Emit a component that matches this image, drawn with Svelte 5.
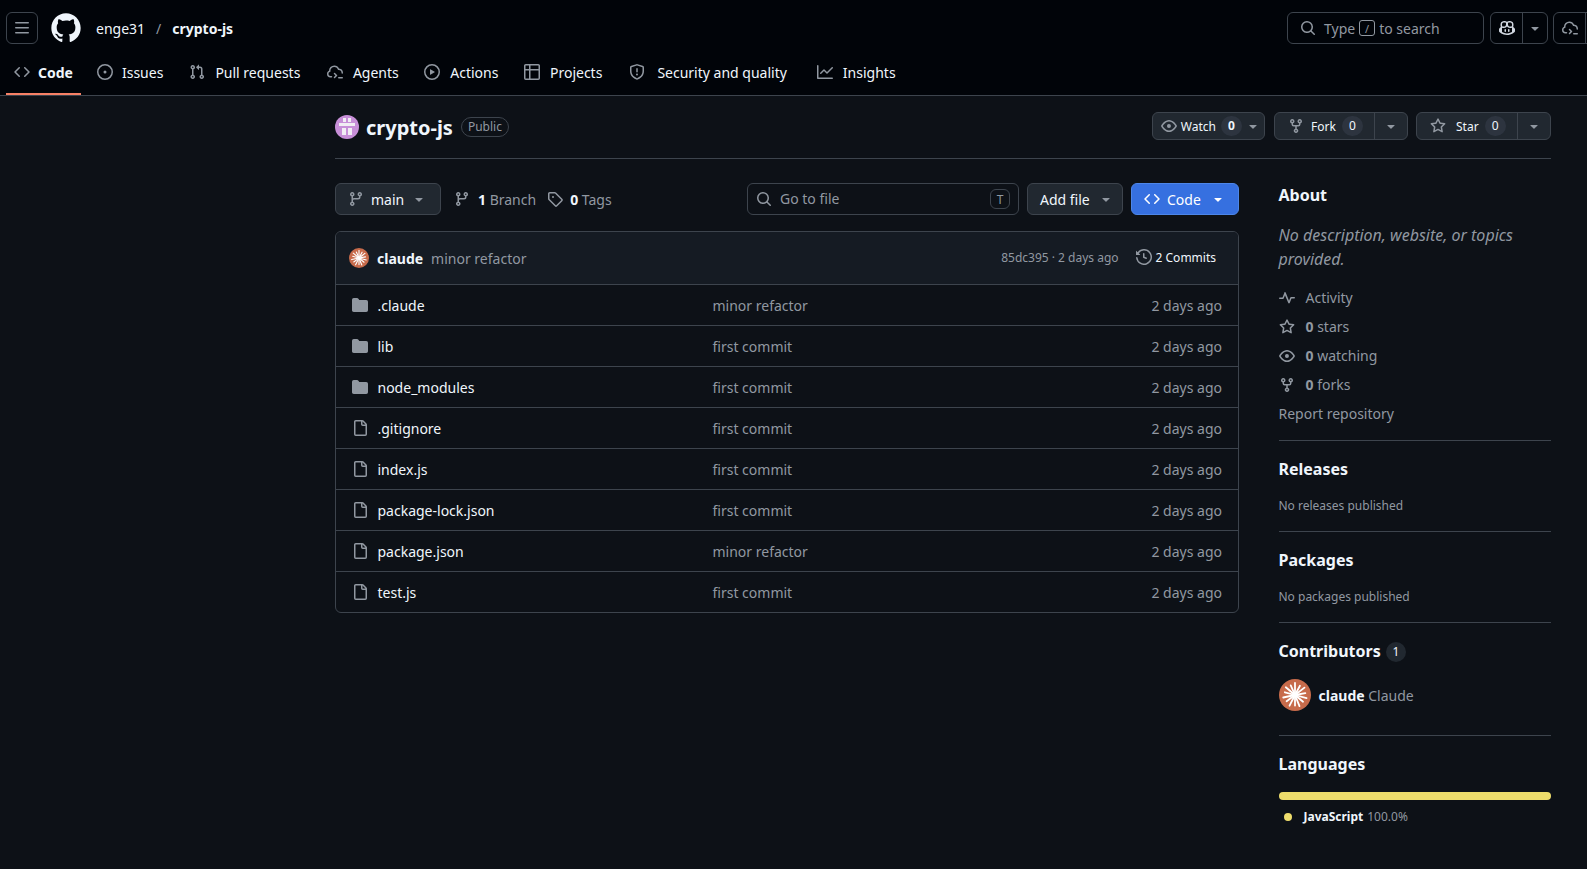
<script>
	const tabs = [
		{ label: 'Code', icon: 'code', active: true },
		{ label: 'Issues', icon: 'issue' },
		{ label: 'Pull requests', icon: 'pr' },
		{ label: 'Agents', icon: 'agent' },
		{ label: 'Actions', icon: 'play' },
		{ label: 'Projects', icon: 'table' },
		{ label: 'Security and quality', icon: 'shield' },
		{ label: 'Insights', icon: 'graph' }
	];

	const files = [
		{ name: '.claude', dir: true, msg: 'minor refactor' },
		{ name: 'lib', dir: true, msg: 'first commit' },
		{ name: 'node_modules', dir: true, msg: 'first commit' },
		{ name: '.gitignore', msg: 'first commit' },
		{ name: 'index.js', msg: 'first commit' },
		{ name: 'package-lock.json', msg: 'first commit' },
		{ name: 'package.json', msg: 'minor refactor' },
		{ name: 'test.js', msg: 'first commit' }
	];

	const icons = {
		bars: 'M1 2.75A.75.75 0 0 1 1.75 2h12.5a.75.75 0 0 1 0 1.5H1.75A.75.75 0 0 1 1 2.75Zm0 5A.75.75 0 0 1 1.75 7h12.5a.75.75 0 0 1 0 1.5H1.75A.75.75 0 0 1 1 7.75ZM1.75 12h12.5a.75.75 0 0 1 0 1.5H1.75a.75.75 0 0 1 0-1.5Z',
		code: 'm11.28 3.22 4.25 4.25a.75.75 0 0 1 0 1.06l-4.25 4.25a.749.749 0 0 1-1.275-.326.749.749 0 0 1 .215-.734L13.94 8l-3.72-3.72a.749.749 0 0 1 .326-1.275.749.749 0 0 1 .734.215Zm-6.56 0a.751.751 0 0 1 1.042.018.751.751 0 0 1 .018 1.042L2.06 8l3.72 3.72a.749.749 0 0 1-.326 1.275.749.749 0 0 1-.734-.215L.47 8.53a.75.75 0 0 1 0-1.06Z',
		issue: 'M8 9.5a1.5 1.5 0 1 0 0-3 1.5 1.5 0 0 0 0 3ZM8 0a8 8 0 1 1 0 16A8 8 0 0 1 8 0ZM1.5 8a6.5 6.5 0 1 0 13 0 6.5 6.5 0 0 0-13 0Z',
		pr: 'M1.5 3.25a2.25 2.25 0 1 1 3 2.122v5.256a2.251 2.251 0 1 1-1.5 0V5.372A2.25 2.25 0 0 1 1.5 3.25Zm5.677-.177L9.573.677A.25.25 0 0 1 10 .854V2.5h1A2.5 2.5 0 0 1 13.5 5v5.628a2.251 2.251 0 1 1-1.5 0V5a1 1 0 0 0-1-1h-1v1.646a.25.25 0 0 1-.427.177L7.177 3.427a.25.25 0 0 1 0-.354ZM3.75 2.5a.75.75 0 1 0 0 1.5.75.75 0 0 0 0-1.5Zm0 9.5a.75.75 0 1 0 0 1.5.75.75 0 0 0 0-1.5Zm8.25.75a.75.75 0 1 0 1.5 0 .75.75 0 0 0-1.5 0Z',
		agent: 'M14.5 8.9v-.052A2.956 2.956 0 0 0 11.542 5.9a.815.815 0 0 1-.751-.501l-.145-.348A3.496 3.496 0 0 0 7.421 2.9h-.206a3.754 3.754 0 0 0-3.736 4.118l.011.121a.822.822 0 0 1-.619.879A1.81 1.81 0 0 0 1.5 9.773v.14c0 1.097.89 1.987 1.987 1.987H4.5a.75.75 0 0 1 0 1.5H3.487A3.487 3.487 0 0 1 0 9.913v-.14C0 8.449.785 7.274 1.963 6.75A5.253 5.253 0 0 1 7.215 1.4h.206a4.992 4.992 0 0 1 4.586 3.024A4.455 4.455 0 0 1 16 8.848V8.9a.75.75 0 0 1-1.5 0ZM6.97 8.97a.75.75 0 0 1 1.06 0l2 2a.75.75 0 0 1 0 1.06l-2 2a.749.749 0 1 1-1.06-1.06L8.44 11.5 6.97 10.03a.75.75 0 0 1 0-1.06ZM11.75 13h3.5a.75.75 0 0 1 0 1.5h-3.5a.75.75 0 0 1 0-1.5Z',
		play: 'M8 0a8 8 0 1 1 0 16A8 8 0 0 1 8 0ZM1.5 8a6.5 6.5 0 1 0 13 0 6.5 6.5 0 0 0-13 0Zm4.879-2.773 4.264 2.559a.25.25 0 0 1 0 .428l-4.264 2.559A.25.25 0 0 1 6 10.559V5.442a.25.25 0 0 1 .379-.215Z',
		table: 'M0 1.75C0 .784.784 0 1.75 0h12.5C15.216 0 16 .784 16 1.75v12.5A1.75 1.75 0 0 1 14.25 16H1.75A1.75 1.75 0 0 1 0 14.25ZM6.5 6.5v8h7.75a.25.25 0 0 0 .25-.25V6.5Zm8-1.5V1.75a.25.25 0 0 0-.25-.25H6.5V5Zm-13 1.5v7.75c0 .138.112.25.25.25H5v-8ZM5 5V1.5H1.75a.25.25 0 0 0-.25.25V5Z',
		shield: 'M7.467.133a1.748 1.748 0 0 1 1.066 0l5.25 1.68A1.75 1.75 0 0 1 15 3.48V7c0 1.566-.32 3.182-1.303 4.682-.983 1.498-2.585 2.813-5.032 3.855a1.697 1.697 0 0 1-1.33 0c-2.447-1.042-4.049-2.357-5.032-3.855C1.32 10.182 1 8.566 1 7V3.48a1.75 1.75 0 0 1 1.217-1.667Zm.61 1.429a.25.25 0 0 0-.153 0l-5.25 1.68a.25.25 0 0 0-.174.238V7c0 1.358.275 2.666 1.057 3.86.784 1.194 2.121 2.34 4.366 3.297a.196.196 0 0 0 .154 0c2.245-.956 3.582-2.104 4.366-3.298C13.225 9.666 13.5 8.36 13.5 7V3.48a.251.251 0 0 0-.174-.237l-5.25-1.68ZM8.75 4.75v3a.75.75 0 0 1-1.5 0v-3a.75.75 0 0 1 1.5 0ZM9 10.5a1 1 0 1 1-2 0 1 1 0 0 1 2 0Z',
		graph: 'M1.5 1.75V13.5h13.75a.75.75 0 0 1 0 1.5H.75a.75.75 0 0 1-.75-.75V1.75a.75.75 0 0 1 1.5 0Zm14.28 2.53-5.25 5.25a.75.75 0 0 1-1.06 0L7 7.06 4.28 9.78a.751.751 0 0 1-1.042-.018.751.751 0 0 1-.018-1.042l3.25-3.25a.75.75 0 0 1 1.06 0L10 7.94l4.72-4.72a.751.751 0 0 1 1.042.018.751.751 0 0 1 .018 1.042Z',
		search: 'M10.68 11.74a6 6 0 0 1-7.922-8.982 6 6 0 0 1 8.982 7.922l3.04 3.04a.749.749 0 0 1-.326 1.275.749.749 0 0 1-.734-.215ZM11.5 7a4.499 4.499 0 1 0-8.997 0A4.499 4.499 0 0 0 11.5 7Z',
		copilot: 'M7.998 15.035c-4.562 0-7.873-2.914-7.998-3.749V9.338c.085-.628.677-1.686 1.588-2.065.013-.07.024-.143.036-.218.029-.183.06-.384.126-.612-.201-.508-.254-1.084-.254-1.656 0-.87.128-1.769.693-2.484.579-.733 1.494-1.124 2.724-1.261 1.206-.134 2.262.034 2.944.765.05.053.096.108.139.165.044-.057.094-.112.143-.165.682-.731 1.738-.899 2.944-.765 1.23.137 2.145.528 2.724 1.261.566.715.693 1.614.693 2.484 0 .572-.053 1.148-.254 1.656.066.228.098.429.126.612.012.076.024.148.037.218.924.385 1.522 1.471 1.591 2.095v1.872c0 .766-3.351 3.795-8.002 3.795Zm0-1.485c2.28 0 4.584-1.11 5.002-1.433V7.862l-.023-.116c-.49.21-1.075.291-1.727.291-1.146 0-2.059-.327-2.71-.991A3.222 3.222 0 0 1 8 6.303a3.24 3.24 0 0 1-.544.743c-.65.664-1.563.991-2.71.991-.652 0-1.236-.081-1.727-.291l-.023.116v4.255c.419.323 2.722 1.433 5.002 1.433ZM6.762 2.83c-.193-.206-.637-.413-1.682-.297-1.019.113-1.479.404-1.713.7-.247.312-.369.789-.369 1.554 0 .793.129 1.171.308 1.371.162.181.519.379 1.442.379.853 0 1.339-.235 1.638-.54.315-.322.527-.827.617-1.553.117-.935-.037-1.395-.241-1.614Zm4.155-.297c-1.044-.116-1.488.091-1.681.297-.204.219-.359.679-.242 1.614.091.726.303 1.231.618 1.553.299.305.784.54 1.638.54.922 0 1.28-.198 1.442-.379.179-.2.308-.578.308-1.371 0-.765-.123-1.242-.37-1.554-.233-.296-.693-.587-1.713-.7ZM6.25 9.037a.75.75 0 0 1 .75.75v1.501a.75.75 0 0 1-1.5 0V9.787a.75.75 0 0 1 .75-.75Zm4.25.75v1.501a.75.75 0 0 1-1.5 0V9.787a.75.75 0 0 1 1.5 0Z',
		eye: 'M8 2c1.981 0 3.671.992 4.933 2.078 1.27 1.091 2.187 2.345 2.637 3.023a1.62 1.62 0 0 1 0 1.798c-.45.678-1.367 1.932-2.637 3.023C11.67 13.008 9.981 14 8 14c-1.981 0-3.671-.992-4.933-2.078C1.797 10.83.88 9.576.43 8.898a1.62 1.62 0 0 1 0-1.798c.45-.677 1.367-1.931 2.637-3.022C4.33 2.992 6.019 2 8 2ZM1.679 7.932a.12.12 0 0 0 0 .136c.411.622 1.241 1.75 2.366 2.717C5.176 11.758 6.527 12.5 8 12.5c1.473 0 2.825-.742 3.955-1.715 1.124-.967 1.954-2.096 2.366-2.717a.12.12 0 0 0 0-.136c-.412-.621-1.242-1.75-2.366-2.717C10.824 4.242 9.473 3.5 8 3.5c-1.473 0-2.825.742-3.955 1.715-1.124.967-1.954 2.096-2.366 2.717ZM8 10a2 2 0 1 1-.001-3.999A2 2 0 0 1 8 10Z',
		fork: 'M5 5.372v.878c0 .414.336.75.75.75h4.5a.75.75 0 0 0 .75-.75v-.878a2.25 2.25 0 1 1 1.5 0v.878a2.25 2.25 0 0 1-2.25 2.25h-1.5v2.128a2.251 2.251 0 1 1-1.5 0V8.5h-1.5A2.25 2.25 0 0 1 3.5 6.25v-.878a2.25 2.25 0 1 1 1.5 0ZM5 3.25a.75.75 0 1 0-1.5 0 .75.75 0 0 0 1.5 0Zm6.75.75a.75.75 0 1 0 0-1.5.75.75 0 0 0 0 1.5Zm-3 8.75a.75.75 0 1 0-1.5 0 .75.75 0 0 0 1.5 0Z',
		star: 'M8 .25a.75.75 0 0 1 .673.418l1.882 3.815 4.21.612a.75.75 0 0 1 .416 1.279l-3.046 2.97.719 4.192a.751.751 0 0 1-1.088.791L8 12.347l-3.766 1.98a.75.75 0 0 1-1.088-.79l.72-4.194L.818 6.374a.75.75 0 0 1 .416-1.28l4.21-.611L7.327.668A.75.75 0 0 1 8 .25Zm0 2.445L6.615 5.5a.75.75 0 0 1-.564.41l-3.097.45 2.24 2.184a.75.75 0 0 1 .216.664l-.528 3.084 2.769-1.456a.75.75 0 0 1 .698 0l2.77 1.456-.53-3.084a.75.75 0 0 1 .216-.664l2.24-2.183-3.096-.45a.75.75 0 0 1-.564-.41L8 2.694Z',
		branch: 'M9.5 3.25a2.25 2.25 0 1 1 3 2.122V6A2.5 2.5 0 0 1 10 8.5H6a1 1 0 0 0-1 1v1.128a2.251 2.251 0 1 1-1.5 0V5.372a2.25 2.25 0 1 1 1.5 0v1.836A2.493 2.493 0 0 1 6 7h4a1 1 0 0 0 1-1v-.628A2.25 2.25 0 0 1 9.5 3.25Zm-6 0a.75.75 0 1 0 1.5 0 .75.75 0 0 0-1.5 0Zm8.25-.75a.75.75 0 1 0 0 1.5.75.75 0 0 0 0-1.5ZM4.25 12a.75.75 0 1 0 0 1.5.75.75 0 0 0 0-1.5Z',
		tag: 'M1 7.775V2.75C1 1.784 1.784 1 2.75 1h5.025c.464 0 .91.184 1.238.513l6.25 6.25a1.75 1.75 0 0 1 0 2.474l-5.026 5.026a1.75 1.75 0 0 1-2.474 0l-6.25-6.25A1.752 1.752 0 0 1 1 7.775Zm1.5 0c0 .066.026.13.073.177l6.25 6.25a.25.25 0 0 0 .354 0l5.025-5.025a.25.25 0 0 0 0-.354l-6.25-6.25a.25.25 0 0 0-.177-.073H2.75a.25.25 0 0 0-.25.25ZM6 5a1 1 0 1 1 0 2 1 1 0 0 1 0-2Z',
		history: 'm.427 1.927 1.215 1.215a8.002 8.002 0 1 1-1.6 5.685.75.75 0 1 1 1.493-.154 6.5 6.5 0 1 0 1.18-4.458l1.358 1.358A.25.25 0 0 1 3.896 6H.25A.25.25 0 0 1 0 5.75V2.104a.25.25 0 0 1 .427-.177ZM7.75 4a.75.75 0 0 1 .75.75v2.992l2.028.812a.75.75 0 0 1-.557 1.392l-2.5-1A.751.751 0 0 1 7 8.25v-3.5A.75.75 0 0 1 7.75 4Z',
		folder: 'M1.75 1A1.75 1.75 0 0 0 0 2.75v10.5C0 14.216.784 15 1.75 15h12.5A1.75 1.75 0 0 0 16 13.25v-8.5A1.75 1.75 0 0 0 14.25 3H7.5a.25.25 0 0 1-.2-.1l-.9-1.2C6.07 1.26 5.55 1 5 1H1.75Z',
		file: 'M2 1.75C2 .784 2.784 0 3.75 0h6.586c.464 0 .909.184 1.237.513l2.914 2.914c.329.328.513.773.513 1.237v9.586A1.75 1.75 0 0 1 13.25 16h-9.5A1.75 1.75 0 0 1 2 14.25Zm1.75-.25a.25.25 0 0 0-.25.25v12.5c0 .138.112.25.25.25h9.5a.25.25 0 0 0 .25-.25V6h-2.75A1.75 1.75 0 0 1 9 4.25V1.5Zm6.75.062V4.25c0 .138.112.25.25.25h2.688l-.011-.013-2.914-2.914-.013-.011Z',
		pulse: 'M6 2c.306 0 .582.187.696.471L10 10.731l1.304-3.26A.751.751 0 0 1 12 7h3.25a.75.75 0 0 1 0 1.5h-2.742l-1.812 4.528a.751.751 0 0 1-1.392 0L6 5.269 4.696 8.53A.75.75 0 0 1 4 9H.75a.75.75 0 0 1 0-1.5h2.742l1.812-4.529A.751.751 0 0 1 6 2Z',
		caret: 'm4.427 7.427 3.396 3.396a.25.25 0 0 0 .354 0l3.396-3.396A.25.25 0 0 0 11.396 7H4.604a.25.25 0 0 0-.177.427Z'
	};

	const octocat = 'M12 1C5.923 1 1 5.923 1 12c0 4.867 3.149 8.979 7.521 10.436.55.096.756-.233.756-.522 0-.262-.013-1.128-.013-2.049-2.764.509-3.479-.674-3.699-1.292-.124-.317-.66-1.293-1.127-1.554-.385-.207-.936-.715-.014-.729.866-.014 1.485.797 1.691 1.128.99 1.663 2.571 1.196 3.204.907.096-.715.385-1.196.701-1.471-2.448-.275-5.005-1.224-5.005-5.432 0-1.196.426-2.186 1.128-2.956-.111-.275-.496-1.402.11-2.915 0 0 .921-.288 3.024 1.128a10.193 10.193 0 0 1 2.75-.371c.936 0 1.871.123 2.75.371 2.104-1.43 3.025-1.128 3.025-1.128.605 1.513.221 2.64.111 2.915.701.77 1.127 1.747 1.127 2.956 0 4.222-2.571 5.157-5.019 5.432.399.344.743 1.004.743 2.035 0 1.471-.014 2.654-.014 3.025 0 .289.206.632.756.522C19.851 20.979 23 16.854 23 12c0-6.077-4.922-11-11-11Z';

	// white rays of the claude avatar
	const rays = [0, 28, 52, 80, 105, 130, 158, 180, 207, 233, 258, 285, 310, 336];
</script>

{#snippet icon(name, size = 16)}
	<svg class="icon" width={size} height={size} viewBox="0 0 16 16" fill="currentColor" aria-hidden="true"><path d={icons[name]} /></svg>
{/snippet}

{#snippet claude(size)}
	<svg class="claude" width={size} height={size} viewBox="0 0 32 32" aria-hidden="true">
		<circle cx="16" cy="16" r="16" fill="#c76b4b" />
		<g stroke="#fff" stroke-width="1.8" stroke-linecap="round">
			{#each rays as r, i}
				<line x1="16" y1="16" x2="16" y2={i % 2 ? 5.5 : 4} transform="rotate({r} 16 16)" />
			{/each}
		</g>
	</svg>
{/snippet}

<header class="top">
	<div class="top-row">
		<button class="hdr-btn menu">{@render icon('bars')}</button>
		<svg class="logo" width="32" height="32" viewBox="0 0 24 24" fill="#f0f6fc" aria-hidden="true"><path d={octocat} /></svg>
		<a class="owner" href="#top">enge31</a>
		<span class="slash">/</span>
		<a class="repo" href="#top">crypto-js</a>
		<div class="spacer"></div>
		<div class="search">
			{@render icon('search')}
			<span>Type</span>
			<kbd>/</kbd>
			<span>to search</span>
		</div>
		<div class="split">
			<span class="seg wide">{@render icon('copilot')}</span>
			<span class="seg narrow">{@render icon('caret')}</span>
		</div>
		<div class="split last">
			<span class="seg wide">{@render icon('agent')}</span>
			<span class="seg narrow">{@render icon('caret')}</span>
		</div>
	</div>
	<nav class="tabs">
		{#each tabs as t}
			<a class="tab" class:active={t.active} href="#top">
				{@render icon(t.icon)}
				<span>{t.label}</span>
			</a>
		{/each}
	</nav>
</header>

<main class="page">
	<div class="repo-head">
		<div class="title">
			<svg class="repo-avatar" width="24" height="24" viewBox="0 0 24 24" aria-hidden="true">
				<circle cx="12" cy="12" r="12" fill="#c78fd8" />
				<g fill="#f1edf4">
					<rect x="8" y="3" width="3" height="4" />
					<rect x="13" y="3" width="3" height="4" />
					<rect x="4" y="8" width="16" height="3" />
					<rect x="7" y="13" width="4" height="7" />
					<rect x="13" y="13" width="4" height="7" />
				</g>
			</svg>
			<strong>crypto-js</strong>
			<span class="public">Public</span>
		</div>
		<div class="actions">
			<div class="pill">
				<span class="pill-main watch">{@render icon('eye')}Watch<em>0</em></span>
				<span class="pill-caret small">{@render icon('caret')}</span>
			</div>
			<div class="pill">
				<span class="pill-main fork">{@render icon('fork')}Fork<em>0</em></span>
				<span class="pill-caret">{@render icon('caret')}</span>
			</div>
			<div class="pill">
				<span class="pill-main star">{@render icon('star')}Star<em>0</em></span>
				<span class="pill-caret">{@render icon('caret')}</span>
			</div>
		</div>
	</div>

	<div class="columns">
		<section class="code-col">
			<div class="toolbar">
				<button class="btn main-btn">{@render icon('branch')}<span>main</span>{@render icon('caret')}</button>
				<span class="meta branch">{@render icon('branch')}<b>1</b> Branch</span>
				<span class="meta tags">{@render icon('tag')}<b>0</b> Tags</span>
				<div class="spacer"></div>
				<div class="goto">
					{@render icon('search')}
					<span>Go to file</span>
					<kbd>T</kbd>
				</div>
				<button class="btn add">Add file{@render icon('caret')}</button>
				<button class="btn primary">{@render icon('code')}<span>Code</span>{@render icon('caret')}</button>
			</div>

			<div class="table">
				<div class="commit">
					{@render claude(20)}
					<b>claude</b>
					<span class="commit-msg">minor refactor</span>
					<div class="spacer"></div>
					<span class="sha">85dc395 · 2 days ago</span>
					<span class="commits">{@render icon('history')}2 Commits</span>
				</div>
				{#each files as f}
					<div class="row">
						<span class="file-icon" class:dir={f.dir}>{@render icon(f.dir ? 'folder' : 'file')}</span>
						<span class="name">{f.name}</span>
						<span class="msg">{f.msg}</span>
						<span class="age">2 days ago</span>
					</div>
				{/each}
			</div>
		</section>

		<aside class="side">
			<section class="about">
				<h2>About</h2>
				<p class="desc">No description, website, or topics provided.</p>
				<ul>
					<li>{@render icon('pulse')}Activity</li>
					<li>{@render icon('star')}<span><b>0</b> stars</span></li>
					<li>{@render icon('eye')}<span><b>0</b> watching</span></li>
					<li>{@render icon('fork')}<span><b>0</b> forks</span></li>
					<li class="report">Report repository</li>
				</ul>
			</section>
			<section class="releases">
				<h2>Releases</h2>
				<p class="none">No releases published</p>
			</section>
			<section class="packages">
				<h2>Packages</h2>
				<p class="none">No packages published</p>
			</section>
			<section class="contrib">
				<h2>Contributors <em class="count">1</em></h2>
				<div class="person">
					{@render claude(32)}
					<span><b>claude</b> <span class="full">Claude</span></span>
				</div>
			</section>
			<section class="langs">
				<h2>Languages</h2>
				<div class="bar"></div>
				<div class="lang"><i></i><b>JavaScript</b><span>100.0%</span></div>
			</section>
		</aside>
	</div>
</main>

<style>
	:global(body) {
		margin: 0;
		background: #0d1117;
		color: #f0f6fc;
		font-family: 'Noto Sans', sans-serif;
		font-size: 14px;
		overflow: hidden;
	}

	a {
		color: inherit;
		text-decoration: none;
	}

	button {
		font: inherit;
		color: inherit;
	}

	b {
		font-weight: 700;
	}

	em {
		font-style: normal;
	}

	.icon {
		flex: none;
		display: block;
	}

	.spacer {
		flex: 1;
	}

	.top {
		background: #010409;
		border-bottom: 1px solid #3d444d;
		height: 95px;
		overflow: hidden;
	}

	.top-row {
		display: flex;
		align-items: center;
		height: 50px;
		padding: 3px 0 0 6px;
		width: 1605px;
	}

	.hdr-btn {
		width: 32px;
		height: 32px;
		padding: 0;
		display: flex;
		align-items: center;
		justify-content: center;
		background: none;
		border: 1px solid #3d444d;
		border-radius: 6px;
		color: #9198a1;
	}

	.logo {
		margin-left: 12px;
	}

	.owner {
		margin-left: 14px;
	}

	.slash {
		margin: 0 11px;
		color: #9198a1;
	}

	.repo {
		font-weight: 700;
	}

	.search {
		width: 197px;
		height: 32px;
		box-sizing: border-box;
		display: flex;
		align-items: center;
		gap: 4px;
		padding-left: 12px;
		border: 1px solid #3d444d;
		border-radius: 6px;
		color: #9198a1;
		margin-right: 6px;
	}

	.search .icon {
		margin-right: 4px;
	}

	.search kbd {
		width: 16px;
		height: 16px;
		box-sizing: border-box;
		border: 1px solid #9198a1;
		border-radius: 3px;
		font: 11px 'Noto Sans', sans-serif;
		display: flex;
		align-items: center;
		justify-content: center;
	}

	.split {
		display: flex;
		height: 32px;
		box-sizing: border-box;
		border: 1px solid #3d444d;
		border-radius: 6px;
		color: #9198a1;
		margin-right: 5px;
	}

	.split.last {
		margin-right: 0;
	}

	.seg {
		display: flex;
		align-items: center;
		justify-content: center;
	}

	.seg.wide {
		width: 31px;
		color: #d1d7e0;
		border-right: 1px solid #3d444d;
	}

	.split.last .seg.wide {
		color: #9198a1;
	}

	.seg.narrow {
		width: 24px;
	}

	.tabs {
		display: flex;
		height: 42px;
		padding-left: 6px;
	}

	.tab {
		display: flex;
		align-items: center;
		gap: 10px;
		padding: 0 8px 4px;
		margin-right: 9.5px;
		height: 42px;
		box-sizing: border-box;
		position: relative;
		color: #f0f6fc;
	}

	.tab:nth-child(1) {
		gap: 8px;
		margin-right: 8px;
	}

	.tab:nth-child(2) {
		gap: 9px;
		margin-right: 10px;
	}

	.tab:nth-child(3) {
		margin-right: 10.5px;
	}

	.tab:nth-child(6) {
		margin-right: 11px;
	}

	.tab:nth-child(7) {
		gap: 12px;
		margin-right: 14px;
	}

	.tab .icon {
		color: #9198a1;
	}

	.tab.active span {
		font-weight: 700;
	}

	.tab.active::after {
		content: '';
		position: absolute;
		left: 0;
		right: 0;
		bottom: 0;
		height: 2px;
		background: #f78166;
	}

	.page {
		padding: 0 36px 0 335px;
	}

	.repo-head {
		display: flex;
		align-items: center;
		justify-content: space-between;
		height: 62px;
		border-bottom: 1px solid #3d444d;
	}

	.title {
		display: flex;
		align-items: center;
	}

	.title strong {
		font-size: 20px;
		font-weight: 700;
		margin-left: 7px;
	}

	.public {
		margin-left: 8px;
		padding: 0 6px;
		height: 20px;
		line-height: 18px;
		box-sizing: border-box;
		font-size: 12px;
		color: #9198a1;
		border: 1px solid #3d444d;
		border-radius: 10px;
	}

	.actions {
		display: flex;
		gap: 8px;
		margin-top: -2px;
	}

	.pill {
		display: flex;
		height: 28px;
		box-sizing: border-box;
		background: #212830;
		border: 1px solid #3d444d;
		border-radius: 6px;
		font-size: 12px;
	}

	.pill:first-child {
		margin-right: 1px;
	}

	.pill-main {
		display: flex;
		align-items: center;
		gap: 4px;
		padding: 0 0 0 8px;
	}

	.pill-main.fork,
	.pill-main.star {
		box-sizing: border-box;
		padding-left: 13px;
		gap: 0;
	}

	.pill-main.fork {
		width: 99px;
	}

	.pill-main.star {
		width: 100px;
	}

	.pill-main .icon {
		color: #9198a1;
	}

	.pill-main.fork .icon {
		margin-right: 7px;
	}

	.pill-main.star .icon {
		margin-right: 10px;
	}

	.pill-main em {
		background: #2d343f;
		border-radius: 10px;
		min-width: 21px;
		height: 20px;
		line-height: 20px;
		text-align: center;
		margin-left: 6px;
	}

	.pill-main.watch em {
		margin-left: 1px;
		font-weight: 700;
	}

	.pill-caret {
		width: 32px;
		display: flex;
		align-items: center;
		justify-content: center;
		border-left: 1px solid #3d444d;
		color: #9198a1;
	}

	.pill-caret.small {
		width: 22px;
		border-left: 0;
	}

	.columns {
		display: flex;
		gap: 39.5px;
		align-items: flex-start;
		padding-top: 24px;
	}

	.code-col {
		width: 904px;
		flex: none;
	}

	.toolbar {
		display: flex;
		align-items: center;
		height: 32px;
		margin-bottom: 16px;
	}

	.btn {
		display: flex;
		align-items: center;
		height: 32px;
		box-sizing: border-box;
		background: #212830;
		border: 1px solid #3d444d;
		border-radius: 6px;
		padding: 0 12px;
		gap: 8px;
		white-space: nowrap;
	}

	.btn .icon {
		color: #9198a1;
	}

	.main-btn {
		width: 106px;
		gap: 7px;
	}

	.add {
		margin-left: 8px;
		width: 96px;
		padding-right: 8px;
		justify-content: space-between;
	}

	.primary {
		margin-left: 8px;
		width: 108px;
		background: #3670e0;
		border-color: #4d86e8;
		color: #fff;
	}

	.primary span {
		margin: 0 1px 0 -1px;
	}

	.primary .icon {
		color: #fff;
	}

	.meta {
		display: flex;
		align-items: center;
		color: #9198a1;
		white-space: pre;
	}

	.meta.branch {
		margin-left: 13px;
	}

	.meta.tags {
		margin-left: 11px;
	}

	.meta .icon {
		margin-right: 8px;
	}

	.meta.tags .icon {
		margin-right: 7px;
	}

	.meta b {
		color: #f0f6fc;
	}

	.goto {
		width: 272px;
		height: 32px;
		box-sizing: border-box;
		display: flex;
		align-items: center;
		gap: 8px;
		padding: 0 8px;
		border: 1px solid #3d444d;
		border-radius: 6px;
		background: #0d1117;
		color: #9198a1;
	}

	.goto span {
		flex: 1;
		margin-top: -2px;
	}

	.goto kbd {
		width: 20px;
		height: 20px;
		box-sizing: border-box;
		border: 1px solid #3d444d;
		border-radius: 6px;
		font: 12px 'Noto Sans', sans-serif;
		display: flex;
		align-items: center;
		justify-content: center;
	}

	.table {
		border: 1px solid #3d444d;
		border-radius: 6px;
		overflow: hidden;
	}

	.commit {
		display: flex;
		align-items: center;
		height: 52px;
		padding: 0 16px 0 13px;
		gap: 8px;
		background: #151b23;
	}

	.commit-msg {
		color: #9198a1;
	}

	.sha {
		font-size: 12px;
		color: #9198a1;
		margin-top: -2px;
	}

	.commits {
		display: flex;
		align-items: center;
		gap: 4px;
		font-size: 12px;
		margin: -2px 6px 0 9px;
	}

	.commits .icon {
		color: #9198a1;
	}

	.row {
		display: grid;
		grid-template-columns: 16px 326.5px 1fr auto;
		align-items: center;
		column-gap: 9px;
		height: 41px;
		box-sizing: border-box;
		padding: 0 16px;
		border-top: 1px solid #3d444d;
	}

	.name {
		padding-left: 0.5px;
	}

	.file-icon {
		color: #9198a1;
	}

	.msg,
	.age {
		color: #9198a1;
	}

	.side {
		flex: 1;
		min-width: 0;
	}

	.side section {
		padding-bottom: 17px;
		margin-bottom: 16px;
		border-bottom: 1px solid #3d444d;
	}

	.side section.about {
		padding-bottom: 12px;
	}

	.side section.contrib {
		padding-bottom: 24px;
	}

	.side section.langs {
		border-bottom: 0;
	}

	.side h2 {
		margin: 0 0 15px;
		font-size: 16px;
		font-weight: 700;
		line-height: 24px;
	}

	.about h2,
	.releases h2,
	.packages h2 {
		margin-bottom: 16px;
	}

	.desc {
		margin: 0 0 12px;
		font-style: italic;
		font-size: 16px;
		line-height: 24px;
		color: #9198a1;
	}

	.side ul {
		list-style: none;
		margin: 0;
		padding: 0;
		color: #9198a1;
	}

	.side li {
		display: flex;
		align-items: center;
		gap: 11px;
		height: 29px;
	}

	.side li b {
		color: #9198a1;
	}

	.none {
		margin: 0;
		font-size: 12px;
		color: #9198a1;
	}

	.count {
		display: inline-block;
		background: #212830;
		font-size: 12px;
		font-weight: 400;
		min-width: 20px;
		height: 20px;
		line-height: 20px;
		text-align: center;
		border-radius: 10px;
		margin-left: 1px;
		vertical-align: 1px;
	}

	.person {
		display: flex;
		align-items: center;
		gap: 8px;
		margin-top: 16px;
	}

	.full {
		color: #9198a1;
	}

	.bar {
		height: 8px;
		margin-top: 16px;
		background: #eedd6c;
		border-radius: 6px;
	}

	.lang {
		display: flex;
		align-items: center;
		margin-top: 8px;
		font-size: 12px;
		color: #9198a1;
	}

	.lang i {
		width: 8px;
		height: 8px;
		border-radius: 50%;
		background: #eedd6c;
		margin: 0 12px 0 5px;
	}

	.lang b {
		color: #f0f6fc;
		margin-right: 4px;
	}
</style>
